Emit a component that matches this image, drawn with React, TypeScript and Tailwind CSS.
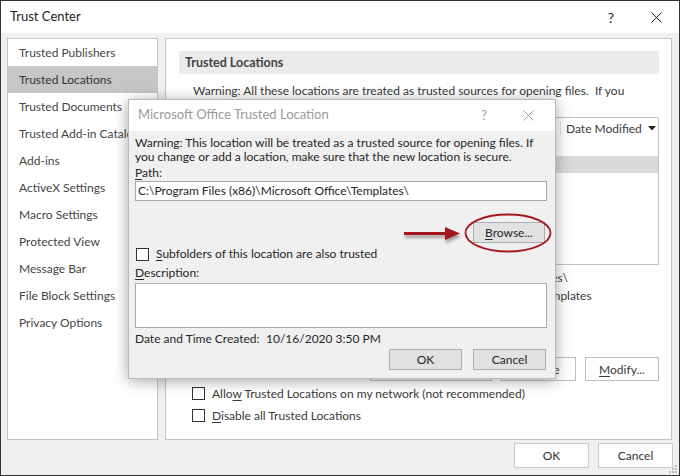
import React from 'react';

const navItems = [
  'Trusted Publishers',
  'Trusted Locations',
  'Trusted Documents',
  'Trusted Add-in Catalogs',
  'Add-ins',
  'ActiveX Settings',
  'Macro Settings',
  'Protected View',
  'Message Bar',
  'File Block Settings',
  'Privacy Options',
];

function XIcon({ className }: { className?: string }) {
  return (
    <svg width="11" height="11" viewBox="0 0 11 11" className={className}>
      <path d="M0.5 0.5L10.5 10.5M10.5 0.5L0.5 10.5" stroke="currentColor" strokeWidth="1" fill="none" />
    </svg>
  );
}

function Checkbox() {
  return <span className="inline-block w-[13px] h-[13px] border border-[#333] bg-white shrink-0" />;
}

function Btn({ children, className }: { children: React.ReactNode; className?: string }) {
  return (
    <div className={`flex items-center justify-center border text-[12px] shrink-0 ${className ?? ''}`}>
      {children}
    </div>
  );
}

function TrustedLocationDialog() {
  return (
    <div className="absolute left-[127px] top-[98px] w-[428px] h-[280px] border border-[#b9b9b9] bg-[#f0f0f0] shadow-[0_2px_14px_rgba(0,0,0,0.35)] flex flex-col text-[#262626]">
      <div className="h-[31px] bg-white flex items-center pl-[9px] shrink-0">
        <span className="text-[13px] text-[#9a9a9a] -mt-[1px]">Microsoft Office Trusted Location</span>
        <span className="ml-auto text-[13px] text-[#a0a0a0] mr-[36px]">?</span>
        <XIcon className="text-[#a0a0a0] mr-[21px]" />
      </div>
      <div className="flex flex-col px-[6px] text-[12px] leading-[14px]">
        <p className="mt-[5px]">
          Warning: This location will be treated as a trusted source for opening files. If
          <br />
          you change or add a location, make sure that the new location is secure.
        </p>
        <div className="mt-[2px]">
          <u className="underline-offset-2">P</u>ath:
        </div>
        <div className="mt-[1px] h-[20px] w-[412px] border border-[#a9a9a9] bg-white flex items-center pl-[2px]">
          C:\Program Files (x86)\Microsoft Office\Templates\
        </div>
        <div className="flex justify-end mt-[21px] pr-[4px]">
          <Btn className="w-[72px] h-[21px] bg-[#e1e1e1] border-[#adadad]">
            <span>
              <u className="underline-offset-2">B</u>rowse...
            </span>
          </Btn>
        </div>
        <div className="flex items-center gap-[7px] mt-[4px] pl-[1px]">
          <Checkbox />
          <span>
            <u className="underline-offset-2">S</u>ubfolders of this location are also trusted
          </span>
        </div>
        <div className="mt-[5px]">
          <u className="underline-offset-2">D</u>escription:
        </div>
        <div className="mt-[3px] h-[45px] w-[412px] border border-[#a9a9a9] bg-white" />
        <div className="mt-[4px] flex">
          <span className="w-[131px]">Date and Time Created:</span>
          <span>10/16/2020 3:50 PM</span>
        </div>
        <div className="flex justify-end gap-[11px] mt-[3px] pr-[3px]">
          <Btn className="w-[73px] h-[21px] bg-[#e1e1e1] border-[#adadad]">OK</Btn>
          <Btn className="w-[73px] h-[21px] bg-[#e1e1e1] border-[#adadad]">Cancel</Btn>
        </div>
      </div>
    </div>
  );
}

function Annotation() {
  return (
    <svg className="absolute left-0 top-0 pointer-events-none" width="680" height="476">
      <defs>
        <filter id="sh" x="-20%" y="-50%" width="140%" height="200%">
          <feDropShadow dx="1" dy="3" stdDeviation="1.5" floodColor="#000" floodOpacity="0.35" />
        </filter>
      </defs>
      <g filter="url(#sh)">
        <line x1="403" y1="232.5" x2="446" y2="232.5" stroke="#a3171d" strokeWidth="3" />
        <path d="M444 226 L459 232.5 L444 239 Z" fill="#a3171d" />
      </g>
      <ellipse cx="507" cy="232" rx="42.5" ry="18.5" fill="none" stroke="#a3171d" strokeWidth="1.8" />
    </svg>
  );
}

export default function App() {
  return (
    <div className="relative w-[680px] h-[476px] overflow-hidden border border-[#333] bg-[#f0f0f0] flex flex-col font-['Segoe_UI','Lato',sans-serif] text-[12px]">
      <div className="h-[32px] bg-white flex items-center pl-[9px] shrink-0 text-[#1e1e1e]">
        <span className="text-[13px]">Trust Center</span>
        <span className="ml-auto text-[14px] mr-[37px]">?</span>
        <XIcon className="mr-[17px] text-[#222]" />
      </div>

      <div className="flex gap-[7px] pl-[6px] pt-[5px] pr-[7px] h-[407px] shrink-0">
        <div className="w-[151px] shrink-0 border border-[#c4c4c4] bg-white overflow-hidden text-[#454545] text-[12px]">
          {navItems.map((item) => (
            <div
              key={item}
              className={`h-[27px] flex items-center pl-[11px] whitespace-nowrap ${item === 'Trusted Locations' ? 'bg-[#c6c6c6] text-[#333]' : ''}`}
            >
              {item}
            </div>
          ))}
        </div>

        <div className="flex-1 min-w-0 overflow-hidden border border-[#c4c4c4] bg-white flex flex-col text-[#3a3a3a] text-[12px] leading-[15px]">
          <div className="mt-[12px] ml-[13px] mr-[12px] h-[23px] bg-[#ebebeb] flex items-center pl-[6px] font-bold text-[#444] text-[12.5px]">
            Trusted Locations
          </div>
          <div className="mt-[9px] ml-[27px] whitespace-nowrap">
            Warning: All these locations are treated as trusted sources for opening files.&nbsp; If you
          </div>
          <div className="mt-[19px] ml-[27px] mr-[12px] h-[148px] border border-[#c4c4c4] flex flex-col shrink-0">
            <div className="h-[21px] flex items-center">
              <span className="w-[122px] pl-[5px]">Path</span>
              <span className="w-[244px] border-l border-[#e5e5e5] pl-[5px]">Description</span>
              <span className="flex-1 border-l border-[#e5e5e5] pl-[5px] flex items-center gap-[6px]">
                Date Modified
                <svg width="8" height="5" viewBox="0 0 8 5"><path d="M0 0H8L4 4.5Z" fill="#222" /></svg>
              </span>
            </div>
            <div className="h-[17px] pl-[5px] font-bold flex items-center">User Locations</div>
            <div className="h-[17px] bg-[#d9d9d9] flex items-center">
              <span className="w-[122px] pl-[5px] whitespace-nowrap overflow-hidden">C:\Program Files (x86)\Microsoft Office\Templates\</span>
              <span className="w-[225px] pl-[5px] whitespace-nowrap overflow-hidden">Office default location: Application Templates</span>
            </div>
          </div>
          <div className="mt-[4px] ml-[27px] flex flex-col leading-[18px] whitespace-nowrap">
            <div className="flex"><span className="w-[84px]">Path:</span><span className="ml-[20px]">C:\Program Files (x86)\Microsoft Office\Templates\</span></div>
            <div className="flex"><span className="w-[84px]">Description:</span><span className="ml-[76px]">Office default location: Application Templates</span></div>
            <div className="flex"><span className="w-[84px]">Date Modified:</span><span></span></div>
            <div className="flex"><span className="w-[84px]">Sub Folders:</span><span className="ml-[20px]">Allowed</span></div>
          </div>
          <div className="mt-[16px] flex justify-end gap-[9px] mr-[12px]">
            <Btn className="w-[122px] h-[24px] bg-white border-[#bdbdbd]">
              <span><u className="underline-offset-2">A</u>dd new location...</span>
            </Btn>
            <Btn className="w-[75px] h-[24px] bg-white border-[#bdbdbd]">
              <span><u className="underline-offset-2">R</u>emove</span>
            </Btn>
            <Btn className="w-[74px] h-[24px] bg-white border-[#bdbdbd]">
              <span><u className="underline-offset-2">M</u>odify...</span>
            </Btn>
          </div>
          <div className="mt-[1px] ml-[26px] flex items-center gap-[7px] h-[22px]">
            <Checkbox />
            <span>Allo<u className="underline-offset-2">w</u> Trusted Locations on my network (not recommended)</span>
          </div>
          <div className="ml-[26px] flex items-center gap-[7px] h-[22px]">
            <Checkbox />
            <span><u className="underline-offset-2">D</u>isable all Trusted Locations</span>
          </div>
        </div>
      </div>

      <div className="flex justify-end gap-[9px] pr-[6px] pt-[3px] text-[#333]">
        <Btn className="w-[75px] h-[25px] bg-[#fdfdfd] border-[#c9c9c9] text-[12.5px]">OK</Btn>
        <Btn className="w-[75px] h-[25px] bg-[#fdfdfd] border-[#c9c9c9] text-[12.5px]">Cancel</Btn>
      </div>

      <svg className="absolute right-[1px] bottom-[1px]" width="10" height="10" viewBox="0 0 10 10">
        <rect x="7" y="1" width="2" height="2" fill="#bbb" />
        <rect x="4" y="4" width="2" height="2" fill="#bbb" />
        <rect x="7" y="4" width="2" height="2" fill="#bbb" />
        <rect x="1" y="7" width="2" height="2" fill="#bbb" />
        <rect x="4" y="7" width="2" height="2" fill="#bbb" />
        <rect x="7" y="7" width="2" height="2" fill="#bbb" />
      </svg>

      <TrustedLocationDialog />
      <Annotation />
    </div>
  );
}
